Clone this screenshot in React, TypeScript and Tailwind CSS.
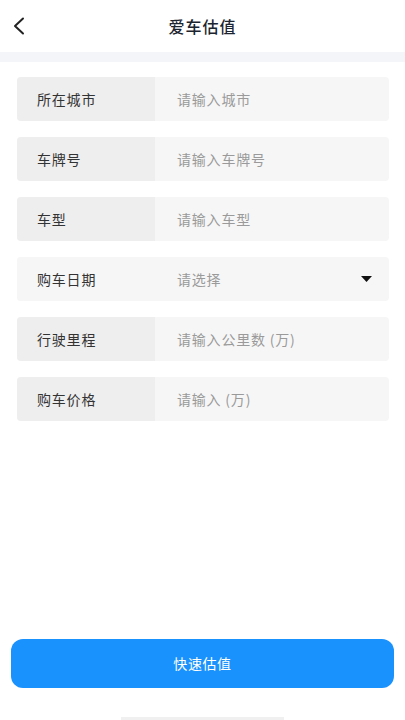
import React from "react";

const font = { fontFamily: '"Noto Sans CJK SC", "Noto Sans", sans-serif' };

type Row = { label: string; placeholder: string; select?: boolean };

const rows: Row[] = [
  { label: "所在城市", placeholder: "请输入城市" },
  { label: "车牌号", placeholder: "请输入车牌号" },
  { label: "车型", placeholder: "请输入车型" },
  { label: "购车日期", placeholder: "请选择", select: true },
  { label: "行驶里程", placeholder: "请输入公里数 (万)" },
  { label: "购车价格", placeholder: "请输入 (万)" },
];

export default function App() {
  return (
    <div className="w-[405px] h-[720px] bg-white flex flex-col overflow-hidden" style={font}>
      <div className="h-[52px] flex items-center relative shrink-0">
        <div className="pl-[12px] flex items-center">
          <svg width="14" height="18" viewBox="0 0 14 18" fill="none">
            <path d="M11 1.5L3 9L11 16.5" stroke="#222" strokeWidth="2" strokeLinecap="round" strokeLinejoin="round" />
          </svg>
        </div>
        <div className="absolute inset-x-0 top-0 h-[52px] flex items-center justify-center text-[16px] tracking-[1px] font-medium text-[#1c2430] pointer-events-none">
          爱车估值
        </div>
      </div>
      <div className="h-[10px] bg-[#f3f5f8] shrink-0" />
      <div className="flex flex-col gap-[16px] pl-[17px] pr-[16px] pt-[15px]">
        {rows.map((r) => (
          <div key={r.label} className="h-[44px] flex rounded-[4px] overflow-hidden bg-[#f6f6f6]">
            <div className={`w-[138px] shrink-0 flex items-center pl-[20px] text-[14px] tracking-[0.8px] text-[#333] ${r.select ? "bg-[#f6f6f6]" : "bg-[#eeeeee]"}`}>
              {r.label}
            </div>
            <div className="flex-1 flex items-center pl-[22px] pr-[17px] text-[14px] tracking-[0.8px] text-[#9a9a9a]">
              <span className="flex-1">{r.placeholder}</span>
              {r.select && (
                <svg width="11" height="6" viewBox="0 0 11 6">
                  <path d="M0 0H11L5.5 6Z" fill="#111" />
                </svg>
              )}
            </div>
          </div>
        ))}
      </div>
      <div className="flex-1" />
      <div className="px-[11px] shrink-0">
        <div className="h-[49px] rounded-[12px] bg-[#1a92fe] flex items-center justify-center text-white text-[14px] tracking-[0.6px]">
          快速估值
        </div>
      </div>
      <div className="h-[32px] flex items-end justify-center shrink-0">
        <div className="w-[163px] h-[3px] bg-[#f0f0f0]" />
      </div>
    </div>
  );
}
